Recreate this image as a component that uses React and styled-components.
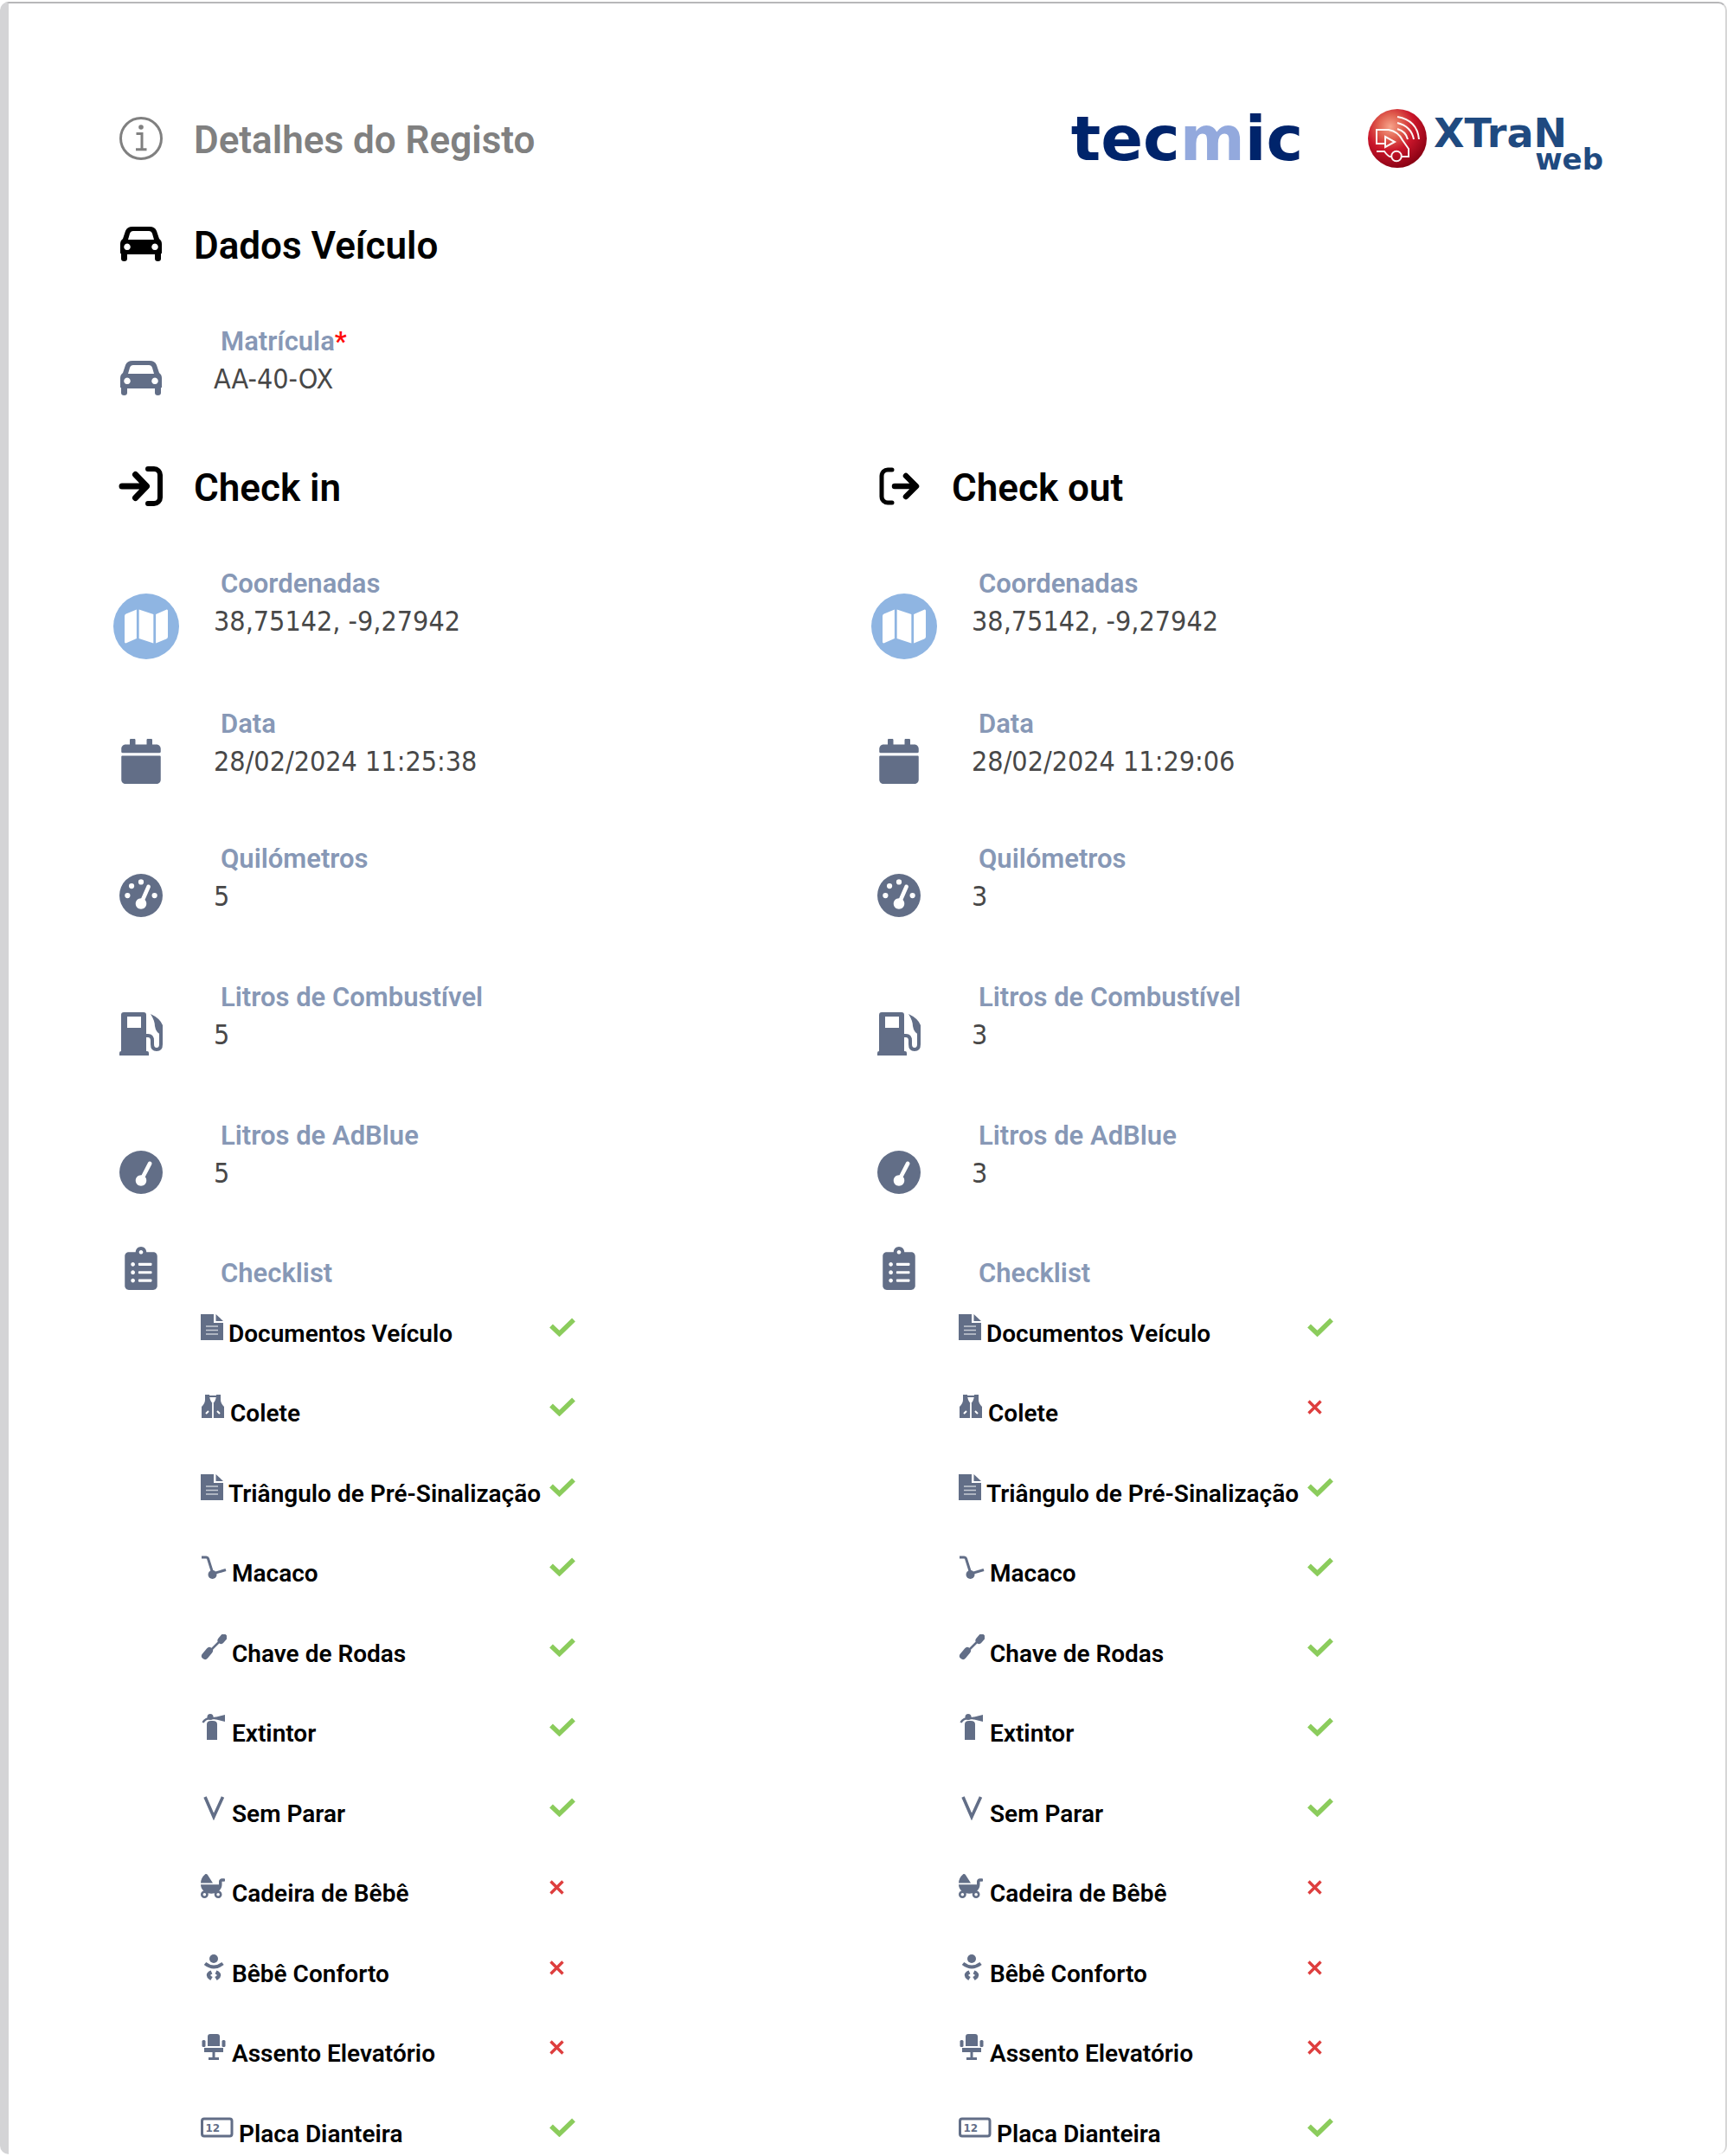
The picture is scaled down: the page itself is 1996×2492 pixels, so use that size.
import React from "react";
import styled, { createGlobalStyle } from "styled-components";
import { FaCalendar, FaClipboardList, FaMap, FaBabyCarriage } from "react-icons/fa";
import { FaGaugeHigh, FaGaugeSimpleHigh } from "react-icons/fa6";

const color = {
  ink: "#000000",
  title: "#808080",
  label: "#8798b6",
  value: "#484848",
  icon: "#626e87",
  required: "#ff0a0a",
  ok: "#8bcc5c",
  fail: "#de3e3e",
  navy: "#00246b",
  periwinkle: "#93a9dd",
  steel: "#1f4a80",
};

const GlobalStyle = createGlobalStyle`
  *, *::before, *::after { box-sizing: border-box; }
  body {
    margin: 0;
    background: #ffffff;
    font-family: Roboto, "Liberation Sans", sans-serif;
  }
`;

const Sheet = styled.main`
  margin: 2px 0;
  min-height: calc(100vh - 4px);
  padding: 132px 111px 0 121px;
  background: #ffffff;
  border-style: solid;
  border-width: 2px 2px 0 10px;
  border-color: #b7b7b9 #d6d6d6 #ffffff #d4d4d6;
  border-radius: 10px;
`;

const Header = styled.header`
  display: flex;
  justify-content: space-between;
  align-items: flex-start;
  margin-bottom: 70px;
`;

const Heading = styled.div`
  display: flex;
  align-items: flex-start;
  color: ${(p) => p.$color || color.ink};

  h1,
  h2 {
    margin: 0 0 0 29px;
    font-size: 44px;
    line-height: 52px;
    font-weight: 600;
  }
`;

const HeadingIcon = styled.span`
  display: flex;
  justify-content: center;
  align-items: center;
  flex: none;
  width: 64px;
  height: 48px;
`;

const Brands = styled.div`
  display: flex;
  align-items: center;
  gap: 44px;
  height: 68px;
  margin: -10px 30px -6px 0;
  font-family: "DejaVu Sans", sans-serif;
  font-weight: 700;
`;

const Tecmic = styled.div`
  width: 330px;
  text-align: center;
  font-size: 72px;
  line-height: 68px;
  color: ${color.navy};

  span {
    color: ${color.periwinkle};
  }
`;

const XTran = styled.div`
  display: flex;
  align-items: center;
  gap: 8px;
`;

const XTranName = styled.div`
  display: flex;
  flex-direction: column;
  width: 196px;
  padding-top: 14px;
  font-size: 46px;
  line-height: 34px;
  color: ${color.steel};

  small {
    align-self: flex-end;
    font-size: 34px;
    line-height: 26px;
  }
`;

const Section = styled.section`
  margin-bottom: 75px;
`;

const Columns = styled.div`
  display: grid;
  grid-template-columns: 1fr 1fr;
`;

const Fields = styled.div`
  margin-top: 67px;
`;

const FieldRow = styled.div`
  display: flex;
  align-items: flex-start;
  margin-bottom: ${(p) => p.$gap || 0}px;
`;

const FieldIcon = styled.span`
  display: flex;
  justify-content: ${(p) => (p.$wide ? "flex-start" : "center")};
  flex: none;
  width: 64px;
  padding-top: ${(p) => p.$top}px;
  color: ${color.icon};
`;

const MapBadge = styled.a`
  display: flex;
  justify-content: center;
  align-items: center;
  flex: none;
  width: 76px;
  height: 76px;
  border-radius: 50%;
  background: #8fb5e2;
  color: #ffffff;
`;

const FieldText = styled.div`
  margin-left: 52px;
  padding-top: ${(p) => p.$top || 0}px;
`;

const Label = styled.div`
  padding-left: 8px;
  font-size: 31px;
  line-height: 36px;
  font-weight: 600;
  color: ${color.label};

  span {
    color: ${color.required};
  }
`;

const Value = styled.div`
  font-family: "DejaVu Sans Condensed", "Noto Sans", sans-serif;
  font-size: 32px;
  line-height: 50px;
  color: ${color.value};
`;

const List = styled.ul`
  display: flex;
  flex-direction: column;
  gap: 54px;
  margin: 28px 0 0 101px;
  padding: 0;
  list-style: none;
`;

const Item = styled.li`
  display: flex;
  align-items: flex-start;
  height: 38px;

  &:nth-child(even) {
    height: 39px;
  }
`;

const ItemName = styled.span`
  display: flex;
  gap: 6px;
  width: 403px;
  font-size: 28px;
  line-height: 32px;
  font-weight: 600;
  color: ${color.ink};
  white-space: nowrap;
`;

const ItemLabel = styled.span`
  padding-top: 7px;
`;

const Mark = styled.span`
  display: flex;
  align-items: center;
  height: 30px;
  color: ${(p) => (p.$ok ? color.ok : color.fail)};
`;

const ItemIcon = styled.svg`
  flex: none;
  height: 30px;
  color: ${color.icon};
`;

const InfoIcon = () => (
  <svg width="50" height="50" viewBox="0 0 50 50" fill="none" stroke="currentColor">
    <circle cx="25" cy="25" r="23.5" strokeWidth="3" />
    <circle cx="25" cy="12" r="2.8" fill="currentColor" stroke="none" />
    <path d="M19.5 19.5h6.5v18M19 37.8h12.5" strokeWidth="3" />
  </svg>
);

const CarIcon = () => (
  <svg width="50" height="50" viewBox="0 0 50 50">
    <path
      fill="currentColor"
      fillRule="evenodd"
      d="M15 5h20q6 0 8 5l3 9q3 2 3 6v11h-1v6q0 3-3.500 3t-3.500-3v-5H9v5q0 3-3.500 3T2 42v-6H1V25q0-4 3-6l3-9q2-5 8-5zM16 10q-3 0-4 3l-2 7h30l-2-7q-1-3-4-3zM9 24.500a3.800 3.800 0 1 0 .01 0zM41 24.500a3.800 3.800 0 1 0 .01 0z"
    />
  </svg>
);

const LoginIcon = () => (
  <svg width="52" height="48" viewBox="0 0 52 48" fill="none" stroke="currentColor" strokeWidth="6" strokeLinecap="round" strokeLinejoin="round">
    <path d="M4 24h28M19.500 10.500l13 13.500-13 13.500" strokeWidth="7" />
    <path d="M34 4h7a7 7 0 0 1 7 7v26a7 7 0 0 1-7 7h-7" />
  </svg>
);

const LogoutIcon = () => (
  <svg width="50" height="48" viewBox="0 0 50 48" fill="none" stroke="currentColor" strokeWidth="5" strokeLinecap="round" strokeLinejoin="round">
    <path d="M17 5h-5a7 7 0 0 0-7 7v24a7 7 0 0 0 7 7h5" />
    <path d="M20 24h24M33 12l12 12-12 12" strokeWidth="6.500" />
  </svg>
);

const PumpIcon = () => (
  <svg width="52" height="50" viewBox="0 0 52 50">
    <path
      fill="currentColor"
      fillRule="evenodd"
      d="M6 0h23a3 3 0 0 1 3 3v42h1a2 2 0 0 1 2 2v3H1v-3a2 2 0 0 1 2-2V3a3 3 0 0 1 3-3zM10 5v13h16V5z"
    />
    <path d="M32 27h2q5 0 5 6v4q0 6 5 6t5-6V20" fill="none" stroke="currentColor" strokeWidth="4" />
    <path d="M37 2q11 5 14 13v12q-8-3-9-11 0-6-5-14z" fill="currentColor" />
  </svg>
);

const CheckIcon = () => (
  <svg width="30" height="22" viewBox="0 0 30 22" role="img" aria-label="Sim">
    <path d="M2 9.500l9.500 9L28 2.500" fill="none" stroke="currentColor" strokeWidth="5.500" />
  </svg>
);

const CrossIcon = () => (
  <svg width="17" height="17" viewBox="0 0 17 17" role="img" aria-label="Não">
    <path d="M1.500 1.500l14 14M15.500 1.500l-14 14" fill="none" stroke="currentColor" strokeWidth="3.400" />
  </svg>
);

const glyphs = {
  doc: {
    width: 26,
    art: (
      <>
        <path d="M0 0h15v10h11v20H0zM17.500 0L26 8h-8.500z" fill="currentColor" />
        <path d="M6 14h14M6 18.500h14M6 23h14" stroke="#fff" strokeWidth="1.600" opacity=".65" />
      </>
    ),
  },
  vest: {
    width: 28,
    art: (
      <>
        <path
          d="M5 1h5q0 6 3.500 10v17H1V15q4-4 4-8zM18 1h5v6q0 4 4 8v13H14.500V11Q18 7 18 1z"
          fill="currentColor"
        />
        <path d="M9 3h10" stroke="currentColor" strokeWidth="2" />
        <path d="M14 11v17" stroke="#fff" strokeWidth="1.600" />
        <path d="M6 23l3-3M19 20l3 3" stroke="#fff" strokeWidth="2" />
      </>
    ),
  },
  jack: {
    width: 30,
    art: (
      <>
        <path d="M1 4h5.500q1.500 0 2 1.500L14 23l15-4.500" fill="none" stroke="currentColor" strokeWidth="3" />
        <circle cx="13.500" cy="24" r="5" fill="currentColor" />
      </>
    ),
  },
  wrench: {
    width: 30,
    art: (
      <>
        <path d="M5 25l5-6M23.500 7l3-3.500" stroke="currentColor" strokeWidth="8" strokeLinecap="round" />
        <path d="M12 18L24 6" stroke="currentColor" strokeWidth="2.500" />
      </>
    ),
  },
  extinguisher: {
    width: 30,
    art: (
      <>
        <path d="M7 12q0-4 5-4h2q5 0 5 4v18H7z" fill="currentColor" />
        <path d="M16 4l12-3v8l-12-3z" fill="currentColor" />
        <path d="M2.500 10Q5 5 12 5h6" fill="none" stroke="currentColor" strokeWidth="2.500" />
        <circle cx="11" cy="3.500" r="3.500" fill="currentColor" />
      </>
    ),
  },
  vee: {
    width: 30,
    art: <path d="M5 3l10 23L25.500 3" fill="none" stroke="currentColor" strokeWidth="3.600" />,
  },
  stroller: { width: 30, art: <FaBabyCarriage x="0" y="0" width="30" height="30" /> },
  baby: {
    width: 30,
    art: (
      <>
        <circle cx="15" cy="5" r="5" fill="currentColor" />
        <path d="M5 10.500q10 8 20.500 0" fill="none" stroke="currentColor" strokeWidth="4" />
        <path d="M12.500 20.500q-7 3 0 7.500M17.500 20.500q7 3 0 7.500" fill="none" stroke="currentColor" strokeWidth="4.500" />
      </>
    ),
  },
  seat: {
    width: 30,
    art: (
      <g fill="currentColor">
        <path d="M8 3a3 3 0 0 1 3-3h8a3 3 0 0 1 3 3v11H8z" />
        <rect x="1.500" y="7" width="4" height="8" rx="1.500" />
        <rect x="24.500" y="7" width="4" height="8" rx="1.500" />
        <path d="M4 16h22v5H4z" />
        <path d="M13.500 21h3v6h4.500v3H9v-3h4.500z" />
      </g>
    ),
  },
  plate: {
    width: 38,
    art: (
      <>
        <rect x="1.500" y="5" width="34.500" height="20" rx="2.500" fill="none" stroke="currentColor" strokeWidth="3" />
        <text x="5.500" y="19.500" fontFamily="DejaVu Sans, sans-serif" fontWeight="700" fontSize="12" fill="currentColor">
          12
        </text>
      </>
    ),
  },
};

const XTranBadge = () => (
  <svg width="68" height="68" viewBox="0 0 68 68">
    <defs>
      <radialGradient id="badge" cx=".38" cy=".3" r=".75">
        <stop offset="0" stopColor="#f7a48c" />
        <stop offset=".28" stopColor="#e0604f" />
        <stop offset=".55" stopColor="#c9152a" />
        <stop offset="1" stopColor="#840012" />
      </radialGradient>
    </defs>
    <circle cx="34" cy="34" r="34" fill="url(#badge)" />
    <g fill="none" stroke="#fff" strokeWidth="2" opacity=".95">
      <path d="M10 41V24h14q11 2 16 12l7 10v9h-8M10 40h9M10 49h9q5 7 8 6" />
      <path d="M20 32l11 6-11 6z" />
      <circle cx="33" cy="54.500" r="5.800" />
      <path d="M34 9q23 4 25 26M34 16q16 4 19 19M34 23q10 3 12 12" />
    </g>
  </svg>
);

const checklist = [
  ["doc", "Documentos Veículo"],
  ["vest", "Colete"],
  ["doc", "Triângulo de Pré-Sinalização"],
  ["jack", "Macaco"],
  ["wrench", "Chave de Rodas"],
  ["extinguisher", "Extintor"],
  ["vee", "Sem Parar"],
  ["stroller", "Cadeira de Bêbê"],
  ["baby", "Bêbê Conforto"],
  ["seat", "Assento Elevatório"],
  ["plate", "Placa Dianteira"],
];

function Field({ icon, label, value, gap, required, iconTop = 35, wide }) {
  return (
    <FieldRow $gap={gap}>
      <FieldIcon $top={iconTop} $wide={wide}>
        {icon}
      </FieldIcon>
      <FieldText>
        <Label>
          {label}
          {required && <span>*</span>}
        </Label>
        <Value>{value}</Value>
      </FieldText>
    </FieldRow>
  );
}

function Register({ title, icon, date, amount, failed }) {
  return (
    <section>
      <Heading>
        <HeadingIcon>{icon}</HeadingIcon>
        <h2>{title}</h2>
      </Heading>
      <Fields>
        <Field
          icon={
            <MapBadge href="#mapa" aria-label="Ver no mapa">
              <FaMap size={50} />
            </MapBadge>
          }
          label="Coordenadas"
          value="38,75142, -9,27942"
          iconTop={29}
          gap={57}
          wide
        />
        <Field icon={<FaCalendar size={52} />} label="Data" value={date} gap={69} />
        <Field icon={<FaGaugeHigh size={50} />} label="Quilómetros" value={amount} gap={74} />
        <Field icon={<PumpIcon />} label="Litros de Combustível" value={amount} gap={74} />
        <Field icon={<FaGaugeSimpleHigh size={50} />} label="Litros de AdBlue" value={amount} gap={60} />
        <FieldRow>
          <FieldIcon $top={0}>
            <FaClipboardList size={50} />
          </FieldIcon>
          <FieldText $top={13}>
            <Label>Checklist</Label>
          </FieldText>
        </FieldRow>
        <List>
          {checklist.map(([kind, name]) => {
            const ok = !failed.includes(name);
            const { width, art } = glyphs[kind];
            return (
              <Item key={name}>
                <ItemName>
                  <ItemIcon width={width} viewBox={`0 0 ${width} 30`}>
                    {art}
                  </ItemIcon>
                  <ItemLabel>{name}</ItemLabel>
                </ItemName>
                <Mark $ok={ok}>{ok ? <CheckIcon /> : <CrossIcon />}</Mark>
              </Item>
            );
          })}
        </List>
      </Fields>
    </section>
  );
}

export default function App() {
  return (
    <>
      <GlobalStyle />
      <Sheet>
        <Header>
          <Heading $color={color.title}>
            <HeadingIcon>
              <InfoIcon />
            </HeadingIcon>
            <h1>Detalhes do Registo</h1>
          </Heading>
          <Brands>
            <Tecmic>
              tec<span>m</span>ic
            </Tecmic>
            <XTran>
              <XTranBadge />
              <XTranName>
                XTraN
                <small>web</small>
              </XTranName>
            </XTran>
          </Brands>
        </Header>

        <Section>
          <Heading>
            <HeadingIcon>
              <CarIcon />
            </HeadingIcon>
            <h2>Dados Veículo</h2>
          </Heading>
          <Fields>
            <Field icon={<CarIcon />} label="Matrícula" value="AA-40-OX" required />
          </Fields>
        </Section>

        <Columns>
          <Register
            title="Check in"
            icon={<LoginIcon />}
            date="28/02/2024 11:25:38"
            amount="5"
            failed={["Cadeira de Bêbê", "Bêbê Conforto", "Assento Elevatório"]}
          />
          <Register
            title="Check out"
            icon={<LogoutIcon />}
            date="28/02/2024 11:29:06"
            amount="3"
            failed={["Colete", "Cadeira de Bêbê", "Bêbê Conforto", "Assento Elevatório"]}
          />
        </Columns>
      </Sheet>
    </>
  );
}
